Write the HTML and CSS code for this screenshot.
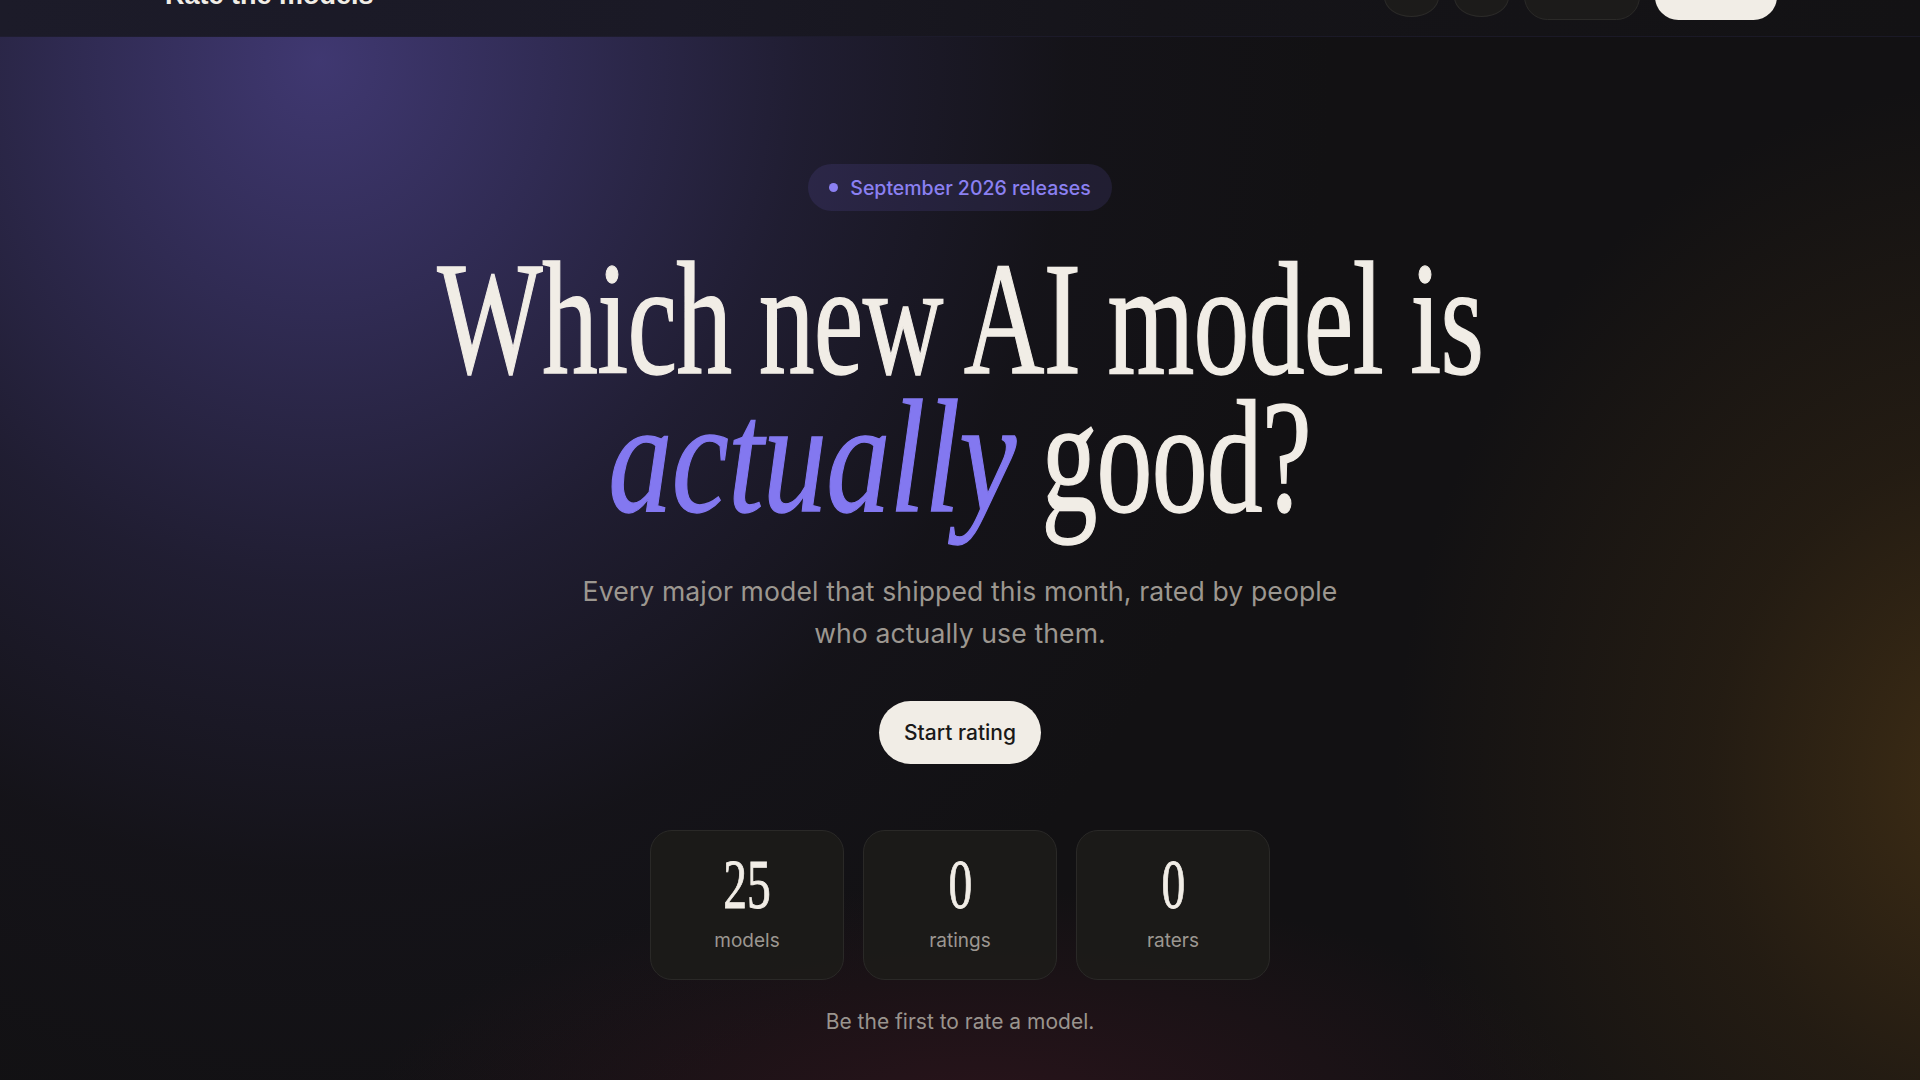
FILE: index.html
```html
<!DOCTYPE html>
<html lang="en">
<head>
<meta charset="utf-8">
<title>Rate the models</title>
<link rel="stylesheet" href="styles.css">
</head>
<body>
<header class="nav">
  <div class="nav-inner">
    <a class="brand" href="#">Rate the models</a>
    <div class="nav-actions">
      <button class="icon-btn" aria-label="Search"></button>
      <button class="icon-btn" aria-label="Theme"></button>
      <button class="ghost-btn">Sign in</button>
      <button class="solid-btn">Rate now</button>
    </div>
  </div>
</header>
<main class="hero">
  <div class="badge"><span class="badge-dot"></span>September 2026 releases</div>
  <h1 class="title">Which new AI model is<br><em class="accent">actually</em> good?</h1>
  <p class="lead">Every major model that shipped this month, rated by people who actually use them.</p>
  <button class="cta">Start rating</button>
  <div class="stats">
    <div class="stat"><span class="stat-num">25</span><span class="stat-label">models</span></div>
    <div class="stat"><span class="stat-num">0</span><span class="stat-label">ratings</span></div>
    <div class="stat"><span class="stat-num">0</span><span class="stat-label">raters</span></div>
  </div>
  <p class="note">Be the first to rate a model.</p>
</main>
</body>
</html>
```
FILE: styles.css
```css
* { box-sizing: border-box; }
html, body { margin: 0; padding: 0; }
body {
  width: 1920px;
  height: 1080px;
  overflow: hidden;
  font-family: Inter, "Noto Sans", sans-serif;
  color: #f1ede6;
  background:
    radial-gradient(ellipse 1150px 1250px at 320px 60px, rgba(66,58,118,0.95) 0%, rgba(56,50,100,0.8) 20%, rgba(42,38,72,0.58) 42%, rgba(26,24,38,0.3) 65%, rgba(18,17,19,0) 88%),
    radial-gradient(ellipse 700px 820px at 1990px 780px, rgba(92,64,22,0.6) 0%, rgba(64,45,18,0.38) 40%, rgba(18,17,19,0) 85%),
    radial-gradient(ellipse 760px 280px at 980px 1110px, rgba(62,22,34,0.5) 0%, rgba(18,17,19,0) 80%),
    #121113;
}

/* nav */
.nav {
  margin-top: -43px;
  height: 80px;
  background: linear-gradient(90deg, #1c1b29 0%, #1a1925 35%, #151419 60%, #131214 100%);
  border-bottom: 1px solid rgba(34, 31, 56, 0.5);
}
.nav-inner {
  height: 100%;
  display: flex;
  align-items: center;
  justify-content: space-between;
  padding: 0 143px 0 165px;
}
.brand {
  font-family: "Liberation Sans", sans-serif;
  font-weight: 700;
  font-size: 27px;
  line-height: 30px;
  padding-bottom: 4px;
  color: #f1ede6;
  text-decoration: none;
}
.nav-actions {
  display: flex;
  align-items: center;
  gap: 15px;
}
.icon-btn {
  width: 55px;
  height: 40px;
  border-radius: 50%;
  background: #1c1b1a;
  border: 1px solid #2b2a28;
}
.ghost-btn, .solid-btn {
  height: 47px;
  padding: 0 0 14px;
  border-radius: 999px;
  font-family: Inter, sans-serif;
  font-size: 15px;
  font-weight: 500;
}
.ghost-btn {
  width: 116px;
  background: #1c1b1a;
  border: 1px solid #2b2a28;
  color: #f1ede6;
}
.solid-btn {
  width: 122px;
  background: #f1ede6;
  border: none;
  color: #1a1918;
}

/* hero */
.hero {
  display: flex;
  flex-direction: column;
  align-items: center;
  padding-top: 127px;
}
.badge {
  display: flex;
  align-items: center;
  gap: 12px;
  height: 47px;
  padding: 0 21px;
  border-radius: 999px;
  background: rgba(120, 108, 230, 0.13);
  color: #8b80f2;
  font-size: 19.5px;
  font-weight: 500;
}
.badge-dot {
  width: 9px;
  height: 9px;
  border-radius: 50%;
  background: #8b80f2;
}
.title {
  margin: 39px 0 0;
  font-family: "Liberation Serif", serif;
  font-weight: 400;
  font-size: 160px;
  line-height: 138px;
  letter-spacing: -1px;
  text-align: center;
  white-space: nowrap;
  color: #f1ede6;
  -webkit-text-stroke: 1.4px #f1ede6;
  transform: scaleX(0.698);
}
.accent {
  display: inline-block;
  font-style: italic;
  color: #8378f0;
  -webkit-text-stroke: 1.3px #8378f0;
  margin: 0 36px;
  transform: scaleX(1.15);
}
.lead {
  margin: 44px 0 0;
  max-width: 800px;
  font-size: 26.6px;
  line-height: 42px;
  letter-spacing: 0.1px;
  text-align: center;
  color: #9c9790;
}
.cta {
  margin-top: 47px;
  height: 63px;
  padding: 0 25px;
  border: none;
  border-radius: 999px;
  background: #f1ede6;
  color: #1a1918;
  font-family: Inter, sans-serif;
  font-size: 21px;
  font-weight: 500;
}
.stats {
  margin-top: 66px;
  display: flex;
  gap: 19px;
}
.stat {
  width: 194px;
  height: 150px;
  border-radius: 22px;
  background: rgba(28, 27, 25, 0.92);
  border: 1px solid #2a2927;
  display: flex;
  flex-direction: column;
  align-items: center;
  padding-top: 19px;
}
.stat-num {
  display: inline-block;
  font-family: "Liberation Serif", serif;
  font-size: 70px;
  line-height: 70px;
  color: #f1ede6;
  -webkit-text-stroke: 0.9px #f1ede6;
  transform: scaleX(0.68);
}
.stat-label {
  margin-top: 9px;
  font-size: 19px;
  line-height: 24px;
  color: #9c9791;
}
.note {
  margin: 28px 0 0;
  font-size: 21px;
  line-height: 28px;
  color: #9a948e;
}
```
